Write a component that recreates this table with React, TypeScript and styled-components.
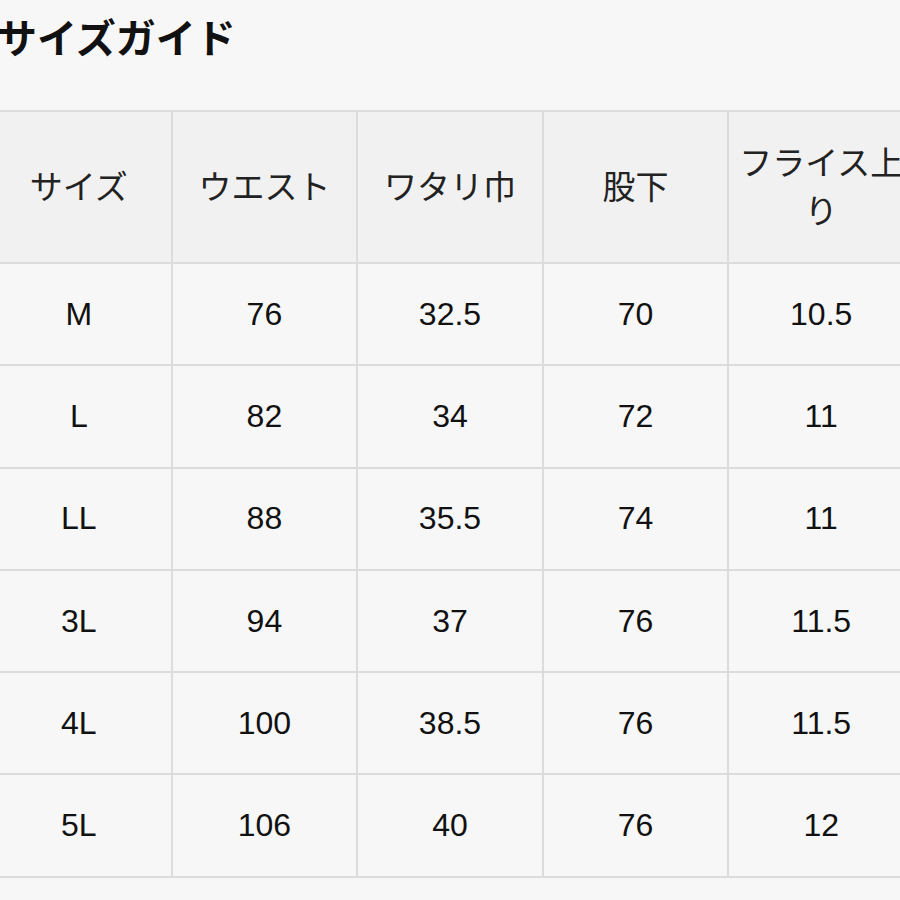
import React from 'react';
import styled, { createGlobalStyle } from 'styled-components';

const GlobalStyle = createGlobalStyle`
    html, body {
        margin: 0;
        padding: 0;
        background: #f7f7f7;
        overflow: hidden;
    }
    body {
        font-family: "Liberation Sans", "Noto Sans CJK JP", sans-serif;
        color: #111;
    }
`;

const Page = styled.div`
    width: 930px;
    margin-left: -15px;
`;

const Title = styled.h1`
    margin: 0;
    padding: 10px 0 0 12px;
    height: 110px;
    box-sizing: border-box;
    font-family: "Noto Sans CJK JP", sans-serif;
    font-size: 40px;
    font-weight: 700;
    line-height: 52px;
    color: #111;
`;

const Table = styled.table`
    width: 930px;
    table-layout: fixed;
    border-collapse: collapse;
`;

const HeadCell = styled.th`
    height: 146px;
    padding: 0 6px 4px;
    border: 2px solid #dcdcdc;
    background: #f1f1f1;
    font-family: "Noto Sans CJK JP", sans-serif;
    font-size: 33px;
    font-weight: 400;
    line-height: 48px;
    color: #222;
    text-align: center;
    vertical-align: middle;
`;

const Cell = styled.td`
    height: 100.3px;
    padding: 0 10px;
    border: 2px solid #dcdcdc;
    background: #f7f7f7;
    font-family: "Liberation Sans", Arial, sans-serif;
    font-size: 32px;
    color: #111;
    text-align: center;
    vertical-align: middle;
`;

const headers = ['サイズ', 'ウエスト', 'ワタリ巾', '股下', 'フライス上り'];

const rows: string[][] = [
    ['M', '76', '32.5', '70', '10.5'],
    ['L', '82', '34', '72', '11'],
    ['LL', '88', '35.5', '74', '11'],
    ['3L', '94', '37', '76', '11.5'],
    ['4L', '100', '38.5', '76', '11.5'],
    ['5L', '106', '40', '76', '12'],
];

const App: React.FC = () => {
    return (
        <>
            <GlobalStyle />
            <Page>
                <Title>サイズガイド</Title>
                <Table>
                    <thead>
                        <tr>
                            {headers.map((h) => (
                                <HeadCell key={h}>{h}</HeadCell>
                            ))}
                        </tr>
                    </thead>
                    <tbody>
                        {rows.map((r) => (
                            <tr key={r[0]}>
                                {r.map((v, i) => (
                                    <Cell key={i}>{v}</Cell>
                                ))}
                            </tr>
                        ))}
                    </tbody>
                </Table>
            </Page>
        </>
    );
};

export default App;
